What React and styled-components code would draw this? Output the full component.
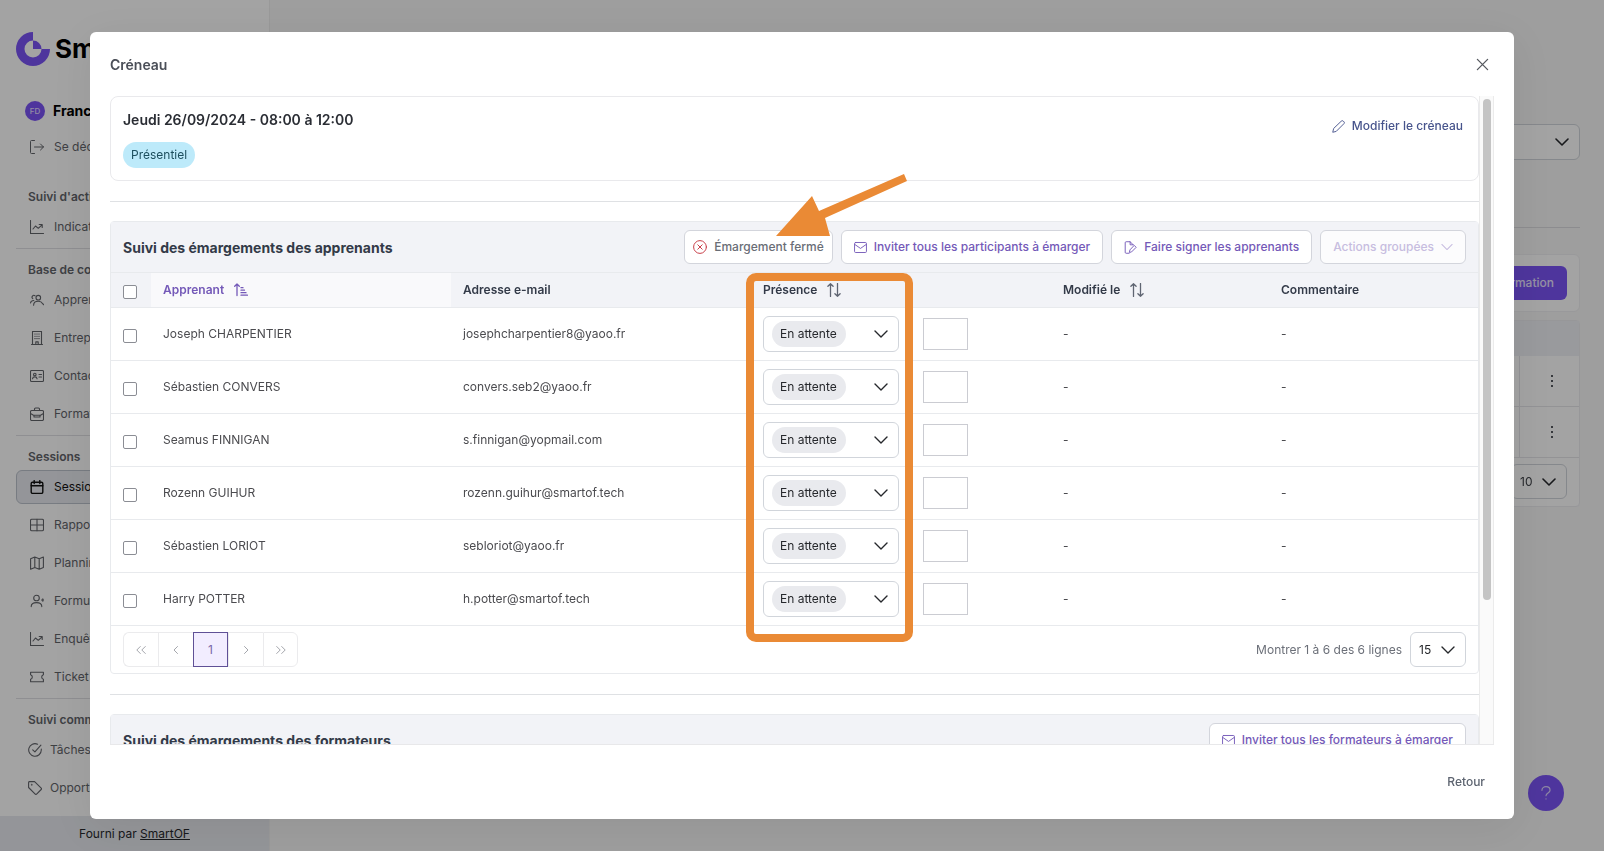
import React, { useState } from 'react';
import styled, { createGlobalStyle, css } from 'styled-components';

const GlobalStyle = createGlobalStyle`
    *, *::before, *::after {
        box-sizing: border-box;
    }

    body {
        margin: 0;
        background: #f7f7f7;
        color: #4b4b4f;
        font-family: Inter, 'Liberation Sans', sans-serif;
        font-size: 12px;
        line-height: 20px;
    }

    button, select, input {
        font: inherit;
        color: inherit;
        margin: 0;
    }

    button {
        cursor: pointer;
    }
`;

// --- ICONS ---

const Icon = ({ size = 14, stroke = 1, box = 14, children }) => (
    <svg
        width={size}
        height={size}
        viewBox={`0 0 ${box} ${box}`}
        fill="none"
        stroke="currentColor"
        strokeWidth={stroke}
        strokeLinecap="round"
        strokeLinejoin="round"
        aria-hidden="true"
    >
        {children}
    </svg>
);

const ICONS = {
    logout: <path d="M4.5.5h-3a1 1 0 0 0-1 1v11a1 1 0 0 0 1 1h3M4.5 7h9M10.5 4l3 3-3 3" />,
    chart: <path d="M.5.5v13h13M3 9l2.5-3 2.8 2.3L12 4.8M9.2 4.5h3v3" />,
    users: (
        <>
            <circle cx="8.3" cy="4.7" r="2.3" />
            <path d="M3.6 12.2c0-2.4 1.9-3.9 4.7-3.9 2 0 3.6.9 4.4 2.4l.8 1M5 2.7a1.8 1.8 0 0 0-2.2 2.9M.5 10c.3-1.6 1.5-2.5 3.3-2.5" />
        </>
    ),
    building: (
        <>
            <path d="M2.5.5h9v13h-9zM5.8 13.5v-2.6h2.4v2.6M1.5 13.5h11" />
            <path d="M4.8 3h.4M6.8 3h.4M8.8 3h.4M4.8 5.3h.4M6.8 5.3h.4M8.8 5.3h.4M4.8 7.6h.4M6.8 7.6h.4M8.8 7.6h.4" />
        </>
    ),
    card: (
        <>
            <rect x=".5" y="1.5" width="13" height="11" rx="1" />
            <circle cx="4.8" cy="5.5" r="1.3" />
            <path d="M2.5 9.8c.2-1.3 1-1.9 2.3-1.9s2.1.6 2.3 1.9M9 5.5h2.5M9 8h2.5" />
        </>
    ),
    briefcase: (
        <>
            <rect x=".5" y="3.5" width="13" height="10" rx="1.3" />
            <path d="M4.5 3.5V2a1 1 0 0 1 1-1h3a1 1 0 0 1 1 1v1.5M.5 6.5l3 1.7h7l3-1.7M4 8.5V10h6V8.5" />
        </>
    ),
    calendar: (
        <>
            <rect x="1.2" y="2.2" width="11.6" height="11.2" rx="1.3" />
            <path d="M1.2 5.8h11.6M4.2.6v3M9.8.6v3" />
        </>
    ),
    grid: (
        <>
            <rect x=".5" y="1.2" width="13" height="11.6" rx="1.3" />
            <path d="M7 1.2v11.6M.5 7h13" />
        </>
    ),
    map: <path d="M.6 2.7 4.8 1l4.4 1.7L13.4 1v10.5l-4.2 1.7-4.4-1.7-4.2 1.7zM4.8 1v10.5M9.2 2.7v10.5" />,
    userPlus: (
        <>
            <circle cx="6.5" cy="4" r="2.8" />
            <path d="M1.2 12.6c0-2.6 2-4 5.3-4s5.3 1.4 5.3 4M11.5 6h2.6M12.8 4.7v2.6" />
        </>
    ),
    ticket: <path d="M.6 2.2h12.8v2.5a2.4 2.4 0 0 0 0 4.6v2.5H.6V9.3a2.4 2.4 0 0 0 0-4.6z" />,
    check: <path d="M13.3 6.1V7A6.3 6.3 0 1 1 9.6 1.2M4.7 6.8l2.2 2.1 6-6.7" />,
    tag: (
        <>
            <path d="M.6 1.5v5l6.6 6.6a1 1 0 0 0 1.4 0l4.6-4.6a1 1 0 0 0 0-1.4L6.6.6h-5a1 1 0 0 0-1 .9z" />
            <circle cx="3.7" cy="3.7" r=".3" />
        </>
    ),
    mail: (
        <>
            <rect x=".6" y="1.6" width="12.8" height="10.8" rx="1.2" />
            <path d="m1 3.8 6 4.2 6-4.2" />
        </>
    ),
    sign: <path d="M5.5 13.2H2.3a1 1 0 0 1-1-1V1.8a1 1 0 0 1 1-1h4.3l3.3 3.3M6.6.8v3.3h3.3M11.3 5l1.8 1.8-5 5-2.3.5.5-2.3z" />,
    closed: (
        <>
            <circle cx="7" cy="7" r="6.4" />
            <path d="M4.8 4.8l4.4 4.4M9.2 4.8L4.8 9.2" />
        </>
    ),
    pencil: <path d="M10.1 1.1a1.3 1.3 0 0 1 1.9 0l.9.9a1.3 1.3 0 0 1 0 1.9L4.5 12.3l-3.7.9.9-3.7z" />,
    close: <path d="M1.5 1.5l11 11M12.5 1.5l-11 11" />,
    down: <path d="M1 4l6 6 6-6" />,
    left: <path d="M8.5 3.5L5 7l3.5 3.5" />,
    right: <path d="M5.5 3.5L9 7l-3.5 3.5" />,
    first: <path d="M6.3 3.5L2.8 7l3.5 3.5M11.3 3.5L7.8 7l3.5 3.5" />,
    last: <path d="M2.7 3.5L6.2 7l-3.5 3.5M7.7 3.5L11.2 7l-3.5 3.5" />,
    sort: <path d="M3.5 13.5V.7M.9 3.3L3.5.7l2.6 2.6M10.5.5v12.8M7.9 10.7l2.6 2.6 2.6-2.6" />,
    sortUp: <path d="M3 12.5V1M.7 3.3L3 1l2.3 2.3M7 4.7h2M7 7.2h3.5M7 9.7h5M7 12.2h6.5" />,
};

const Glyph = ({ name, ...rest }) => <Icon {...rest}>{ICONS[name]}</Icon>;

const Logo = () => (
    <svg width="34" height="34" viewBox="0 0 34 34" aria-hidden="true">
        <path d="M17 0a17 17 0 1 0 17 17h-8.5A8.5 8.5 0 1 1 17 8.5z" fill="#7b54f6" />
        <path d="M17 8.5V17h8.5A8.5 8.5 0 0 0 17 8.5z" fill="#7b54f6" />
    </svg>
);

// --- DATA ---

const MENU = [
    {
        title: "Suivi d'activité",
        items: [{ icon: 'chart', label: 'Indicateurs' }],
    },
    {
        title: 'Base de contacts',
        items: [
            { icon: 'users', label: 'Apprenants' },
            { icon: 'building', label: 'Entreprises' },
            { icon: 'card', label: 'Contacts' },
            { icon: 'briefcase', label: 'Formateurs' },
        ],
    },
    {
        title: 'Sessions',
        items: [
            { icon: 'calendar', label: 'Sessions', active: true },
            { icon: 'grid', label: 'Rapports' },
            { icon: 'map', label: 'Planning' },
            { icon: 'userPlus', label: 'Formulaires' },
            { icon: 'chart', label: 'Enquêtes' },
            { icon: 'ticket', label: 'Ticket' },
        ],
    },
    {
        title: 'Suivi commercial',
        tight: true,
        items: [
            { icon: 'check', label: 'Tâches' },
            { icon: 'tag', label: 'Opportunités' },
        ],
    },
];

const LEARNERS = [
    { name: 'Joseph CHARPENTIER', email: 'josephcharpentier8@yaoo.fr' },
    { name: 'Sébastien CONVERS', email: 'convers.seb2@yaoo.fr' },
    { name: 'Seamus FINNIGAN', email: 's.finnigan@yopmail.com' },
    { name: 'Rozenn GUIHUR', email: 'rozenn.guihur@smartof.tech' },
    { name: 'Sébastien LORIOT', email: 'sebloriot@yaoo.fr' },
    { name: 'Harry POTTER', email: 'h.potter@smartof.tech' },
];

// --- PARTS ---

const Sidebar = () => (
    <SidebarBox>
        <Brand><Logo />SmartOF</Brand>
        <User><Avatar>FD</Avatar>Franck</User>
        <MenuLink href="#logout"><Glyph name="logout" />Se déconnecter</MenuLink>
        <nav>
            {MENU.map((section) => (
                <MenuSection key={section.title}>
                    <MenuTitle>{section.title}</MenuTitle>
                    <MenuItems>
                        {section.items.map((item) => (
                            <MenuLink key={item.label} href="#menu" $active={item.active} $tight={section.tight}>
                                <Glyph name={item.icon} stroke={item.active ? 1.4 : 1.1} />
                                {item.label}
                            </MenuLink>
                        ))}
                    </MenuItems>
                </MenuSection>
            ))}
        </nav>
        <PoweredBy>Fourni par&nbsp;<a href="#smartof">SmartOF</a></PoweredBy>
    </SidebarBox>
);

const SessionPage = () => (
    <Main>
        <SelectBox $height={36}>
            <Select aria-label="Session"><option></option></Select>
            <Glyph name="down" stroke={1.6} />
        </SelectBox>
        <PageRule />
        <PageCard>
            <PrimaryButton type="button">Ajouter une formation</PrimaryButton>
        </PageCard>
        <PageTable>
            <PageTableHead />
            {[1, 2].map((row) => (
                <PageTableRow key={row}>
                    <MenuButton type="button" aria-label="Actions">
                        <i /><i /><i />
                    </MenuButton>
                </PageTableRow>
            ))}
            <PageTableFoot>
                <SelectBox $height={35}>
                    <Select aria-label="Lignes par page" $compact><option>10</option></Select>
                    <Glyph name="down" stroke={1.6} />
                </SelectBox>
            </PageTableFoot>
        </PageTable>
    </Main>
);

const PresenceSelect = ({ name }) => (
    <SelectBox $height={36} $pill>
        <Select aria-label={`Présence de ${name}`} $pill>
            <option>En attente</option>
            <option>Présent</option>
            <option>Absent</option>
        </Select>
        <Glyph name="down" stroke={1.4} />
    </SelectBox>
);

const LearnersTable = () => {
    const [selected, setSelected] = useState([]);

    const toggle = (name) => {
        setSelected(selected.includes(name) ? selected.filter((n) => n !== name) : [...selected, name]);
    };

    const toggleAll = () => {
        setSelected(selected.length === LEARNERS.length ? [] : LEARNERS.map((l) => l.name));
    };

    return (
        <Table>
            <colgroup>
                <Col $width={40} />
                <Col $width={300} />
                <Col $width={300} />
                <Col $width={160} />
                <Col $width={140} />
                <Col $width={218} />
                <Col $width={209} />
            </colgroup>
            <thead>
                <tr>
                    <Th>
                        <Checkbox
                            aria-label="Tout sélectionner"
                            checked={selected.length === LEARNERS.length}
                            onChange={toggleAll}
                        />
                    </Th>
                    <Th $sorted><ThLabel $sorted>Apprenant <Glyph name="sortUp" stroke={1.3} /></ThLabel></Th>
                    <Th>Adresse e-mail</Th>
                    <Th><ThLabel>Présence <Glyph name="sort" stroke={1.3} /></ThLabel></Th>
                    <Th />
                    <Th><ThLabel>Modifié le <Glyph name="sort" stroke={1.3} /></ThLabel></Th>
                    <Th>Commentaire</Th>
                </tr>
            </thead>
            <tbody>
                {LEARNERS.map(({ name, email }) => (
                    <tr key={email}>
                        <Td>
                            <Checkbox
                                aria-label={`Sélectionner ${name}`}
                                checked={selected.includes(name)}
                                onChange={() => toggle(name)}
                            />
                        </Td>
                        <Td>{name}</Td>
                        <Td>{email}</Td>
                        <Td><PresenceSelect name={name} /></Td>
                        <Td><SignatureBox /></Td>
                        <Td>-</Td>
                        <Td>-</Td>
                    </tr>
                ))}
            </tbody>
        </Table>
    );
};

const Paginator = () => (
    <PanelFooter>
        <Pages>
            <PageButton type="button" aria-label="Première page"><Glyph name="first" /></PageButton>
            <PageButton type="button" aria-label="Page précédente"><Glyph name="left" /></PageButton>
            <PageButton type="button" $active>1</PageButton>
            <PageButton type="button" aria-label="Page suivante"><Glyph name="right" /></PageButton>
            <PageButton type="button" aria-label="Dernière page"><Glyph name="last" /></PageButton>
        </Pages>
        <RowsPerPage>
            Montrer 1 à 6 des 6 lignes
            <SelectBox $height={35}>
                <Select aria-label="Lignes par page" $compact>
                    <option>15</option>
                    <option>30</option>
                </Select>
                <Glyph name="down" stroke={1.4} />
            </SelectBox>
        </RowsPerPage>
    </PanelFooter>
);

const SlotDialog = () => (
    <Dialog role="dialog" aria-modal="true" aria-labelledby="slot-title">
        <DialogHeader>
            <DialogTitle id="slot-title">Créneau</DialogTitle>
            <CloseButton type="button" aria-label="Fermer"><Glyph name="close" size={13} stroke={1.4} /></CloseButton>
        </DialogHeader>
        <DialogBody>
            <ScrollArea>
                <SlotCard>
                    <div>
                        <SlotDate>Jeudi 26/09/2024 - 08:00 à 12:00</SlotDate>
                        <Badge>Présentiel</Badge>
                    </div>
                    <EditButton type="button"><Glyph name="pencil" size={13} />Modifier le créneau</EditButton>
                </SlotCard>
                <Rule />
                <Panel>
                    <PanelHeader>
                        <PanelTitle>Suivi des émargements des apprenants</PanelTitle>
                        <Actions>
                            <ActionButton type="button" $muted><Glyph name="closed" />Émargement fermé</ActionButton>
                            <ActionButton type="button"><Glyph name="mail" size={13} />Inviter tous les participants à émarger</ActionButton>
                            <ActionButton type="button"><Glyph name="sign" size={13} />Faire signer les apprenants</ActionButton>
                            <ActionButton type="button" disabled>Actions groupées<Glyph name="down" size={12} stroke={1.2} /></ActionButton>
                        </Actions>
                    </PanelHeader>
                    <LearnersTable />
                    <Paginator />
                    <Highlight>
                        <svg width="132" height="64" viewBox="0 0 132 64" aria-hidden="true">
                            <path d="M128 0l3 7L49 44l5 18H0L36 22l7 15z" fill="#ea8a35" />
                        </svg>
                    </Highlight>
                </Panel>
                <Rule />
                <Panel>
                    <PanelHeader>
                        <PanelTitle>Suivi des émargements des formateurs</PanelTitle>
                        <Actions>
                            <ActionButton type="button"><Glyph name="mail" size={13} />Inviter tous les formateurs à émarger</ActionButton>
                        </Actions>
                    </PanelHeader>
                </Panel>
            </ScrollArea>
            <ScrollTrack><ScrollThumb /></ScrollTrack>
        </DialogBody>
        <DialogFooter>
            <BackButton type="button">Retour</BackButton>
        </DialogFooter>
    </Dialog>
);

const App = () => (
    <>
        <GlobalStyle />
        <Shell>
            <Sidebar />
            <SessionPage />
            <HelpButton type="button" aria-label="Aide">
                <Icon size={18} box={20} stroke={1.3}>
                    <path d="M5.5 7C5.5 4.5 7.5 3 10 3s4.500 1.500 4.500 4c0 3-4.500 3-4.500 6M10 16.500v.2" />
                </Icon>
            </HelpButton>
        </Shell>
        <Overlay>
            <SlotDialog />
        </Overlay>
    </>
);

export default App;

// --- PAGE ---

const Shell = styled.div`
    display: flex;
    height: 100vh;
    overflow: hidden;
`;

const SidebarBox = styled.aside`
    display: flex;
    flex-direction: column;
    flex: none;
    width: 270px;
    padding: 32px 16px 0;
    background: #ffffff;
    border-right: 1px solid #f0f0f0;
    color: #62646a;
`;

const Brand = styled.div`
    display: flex;
    align-items: center;
    gap: 5px;
    height: 34px;
    color: #000000;
    font-size: 26px;
    font-weight: 700;
`;

const User = styled.div`
    display: flex;
    align-items: center;
    gap: 8px;
    height: 30px;
    margin: 30px 0 4px;
    padding-left: 9px;
    color: #000000;
    font-size: 14px;
    font-weight: 700;
`;

const Avatar = styled.span`
    display: grid;
    place-items: center;
    width: 20px;
    height: 20px;
    border-radius: 50%;
    background: #7b54f6;
    color: #e4dcff;
    font-size: 8px;
    font-weight: 500;
`;

const MenuLink = styled.a`
    display: flex;
    align-items: center;
    gap: ${({ $tight }) => ($tight ? 8 : 10)}px;
    height: 34px;
    padding-left: ${({ $tight }) => ($tight ? 12 : 14)}px;
    color: inherit;
    text-decoration: none;

    ${({ $active }) => $active && css`
        padding-left: 13px;
        border: 1px solid #bcc2cc;
        border-radius: 6px;
        background: #e8eaef;
        color: #111111;
    `}
`;

const MenuSection = styled.section`
    padding-top: 8px;
    margin-bottom: 4px;

    &:first-child {
        padding-top: 20px;
    }

    & + & {
        border-top: 1px solid #e0e0e4;
    }
`;

const MenuTitle = styled.h3`
    margin: 0;
    padding-left: 12px;
    font-size: 12px;
    line-height: 26px;
    font-weight: 600;
`;

const MenuItems = styled.div`
    display: grid;
    gap: 4px;
`;

const PoweredBy = styled.footer`
    display: flex;
    align-items: center;
    justify-content: center;
    height: 35px;
    margin: auto -16px 0;
    background: #e8eaef;
    color: #26282c;

    a {
        color: inherit;
    }
`;

const Main = styled.main`
    flex: 1;
    padding: 124px 24px 0 16px;
`;

const PageRule = styled.hr`
    height: 1px;
    margin: 67px 0 26px;
    border: 0;
    background: #dcdce0;
`;

const PageCard = styled.div`
    display: flex;
    justify-content: flex-end;
    margin-bottom: 8px;
    padding: 11px 12px;
    border: 1px solid #f0f0f2;
    border-radius: 6px;
    background: #ffffff;
`;

const PrimaryButton = styled.button`
    height: 34px;
    padding: 0 13px;
    border: 0;
    border-radius: 6px;
    background: #7b54f6;
    color: #e9e3ff;
    font-weight: 500;
`;

const PageTable = styled.div`
    border: 1px solid #ececf0;
    border-radius: 4px;
    background: #ffffff;
`;

const PageTableHead = styled.div`
    height: 35px;
    background: #eff1f6;
`;

const PageTableRow = styled.div`
    display: flex;
    justify-content: flex-end;
    height: 51px;
    border-bottom: 1px solid #e6e6ea;
`;

const MenuButton = styled.button`
    display: flex;
    flex-direction: column;
    align-items: center;
    justify-content: center;
    gap: 3px;
    width: 60px;
    padding: 0 0 0 4px;
    border: 0;
    border-left: 1px solid #e6e6ea;
    background: none;

    i {
        width: 2px;
        height: 2px;
        background: #55585e;
    }
`;

const PageTableFoot = styled.div`
    display: flex;
    justify-content: flex-end;
    padding: 6px 12px 7px;
`;

const HelpButton = styled.button`
    position: fixed;
    right: 40px;
    bottom: 40px;
    display: grid;
    place-items: center;
    width: 36px;
    height: 36px;
    padding: 0;
    border: 0;
    border-radius: 50%;
    background: #7b54f6;
    color: #ddd3ff;
`;

// --- FORM CONTROLS ---

const SelectBox = styled.div`
    display: grid;
    align-items: center;
    height: ${({ $height }) => $height}px;
    border: 1px solid #d1d5db;
    border-radius: 6px;
    background: #ffffff;
    color: #26282c;

    ${({ $pill }) => $pill && css`
        max-width: 136px;

        &::before {
            content: '';
            grid-area: 1 / 1;
            width: 74px;
            height: 26px;
            margin-left: 8px;
            border-radius: 13px;
            background: #e9eaee;
        }
    `}

    svg {
        grid-area: 1 / 1;
        justify-self: end;
        margin-right: 10px;
        pointer-events: none;
    }
`;

const Select = styled.select`
    grid-area: 1 / 1;
    z-index: 1;
    width: 100%;
    height: 100%;
    padding: 0 36px 0 ${({ $pill }) => ($pill ? 16 : 8)}px;
    border: 0;
    background: transparent;
    appearance: none;
    ${({ $compact }) => $compact && 'width: 54px; padding-right: 26px;'}
`;

const Checkbox = styled.input.attrs({ type: 'checkbox' })`
    display: block;
    width: 14px;
    height: 14px;
    margin-top: 4px;
    border: 1px solid #8b8d94;
    border-radius: 2px;
    background: #ffffff;
    appearance: none;

    &:checked {
        border-color: #7b54f6;
        background: #7b54f6;
    }
`;

// --- DIALOG ---

const Overlay = styled.div`
    position: fixed;
    inset: 0;
    display: grid;
    padding: 32px 90px;
    background: rgba(0, 0, 0, 0.36);
`;

const Dialog = styled.section`
    display: flex;
    flex-direction: column;
    min-width: 0;
    min-height: 0;
    padding: 0 20px;
    border-radius: 6px;
    background: #ffffff;
    box-shadow: 0 9px 46px 8px rgba(0, 0, 0, 0.06);
`;

const DialogHeader = styled.header`
    display: flex;
    align-items: center;
    justify-content: space-between;
    flex: none;
    height: 64px;
`;

const DialogTitle = styled.h2`
    margin: 0;
    padding-top: 2px;
    color: #4b4f58;
    font-size: 14px;
    font-weight: 600;
`;

const CloseButton = styled.button`
    display: grid;
    place-items: center;
    width: 24px;
    height: 24px;
    padding: 0;
    border: 0;
    background: none;
    color: #55585e;
`;

const DialogBody = styled.div`
    display: flex;
    flex: 1;
    min-height: 0;
    border-bottom: 1px solid #e8e8ea;
`;

const ScrollArea = styled.div`
    flex: 1;
    min-width: 0;
    overflow-y: auto;
    scrollbar-width: none;
`;

const ScrollTrack = styled.div`
    flex: none;
    width: 15px;
    padding: 3px 0;
    border: 1px solid #ebebeb;
    border-width: 0 1px;
    background: #fafafa;
`;

const ScrollThumb = styled.div`
    width: 8px;
    height: 78%;
    margin: 0 auto;
    border-radius: 4px;
    background: #c4c4c4;
`;

const SlotCard = styled.section`
    display: flex;
    justify-content: space-between;
    align-items: flex-start;
    padding: 12px;
    border: 1px solid #e9e9ec;
    border-radius: 8px;
`;

const SlotDate = styled.div`
    margin-bottom: 11px;
    color: #2a2d34;
    font-size: 14px;
    line-height: 22px;
    font-weight: 600;
`;

const Badge = styled.span`
    display: block;
    width: fit-content;
    padding: 0 8px;
    border-radius: 13px;
    background: #bdeafa;
    color: #1d4f5e;
    line-height: 26px;
`;

const EditButton = styled.button`
    display: flex;
    align-items: center;
    gap: 7px;
    height: 34px;
    padding: 0 3px;
    border: 0;
    background: none;
    color: #47548c;
    font-weight: 500;
`;

const Rule = styled.hr`
    height: 1px;
    margin: 20px 0 19px;
    border: 0;
    background: #dfe1e4;
`;

const Panel = styled.section`
    position: relative;
    border: 1px solid #e8eaed;
    border-radius: 4px;
`;

const PanelHeader = styled.header`
    display: flex;
    align-items: center;
    justify-content: space-between;
    padding: 8px 12px;
    background: #f2f3f7;
`;

const PanelTitle = styled.h3`
    margin: 0;
    padding-top: 2px;
    color: #333a48;
    font-size: 14px;
    font-weight: 700;
`;

const Actions = styled.div`
    display: flex;
    gap: 8px;
`;

const ActionButton = styled.button`
    display: flex;
    align-items: center;
    gap: 7px;
    height: 34px;
    padding: 0 12px;
    border: 1px solid #d3d5dc;
    border-radius: 6px;
    background: #ffffff;
    color: #7459b8;
    font-weight: 500;
    white-space: nowrap;

    ${({ $muted }) => $muted && css`
        padding: 0 8px;
        color: #696d76;

        svg {
            color: #c9404a;
        }
    `}

    &:disabled {
        background: #fcfcfd;
        color: #c7bde0;
    }
`;

const Table = styled.table`
    width: 100%;
    table-layout: fixed;
    border-spacing: 0;
`;

const Col = styled.col`
    width: ${({ $width }) => $width}px;
`;

const Th = styled.th`
    height: 36px;
    padding: 0 12px;
    border: 1px solid #e8eaed;
    border-width: 1px 0;
    background: ${({ $sorted }) => ($sorted ? '#f9f9fb' : '#f2f3f7')};
    color: ${({ $sorted }) => ($sorted ? '#7459b8' : '#333a48')};
    font-weight: 600;
    text-align: left;
`;

const ThLabel = styled.span`
    display: flex;
    align-items: center;
    gap: 10px;

    svg {
        color: ${({ $sorted }) => ($sorted ? '#7459b8' : '#5f6572')};
    }
`;

const Td = styled.td`
    height: 53px;
    padding: 0 12px;
    border-bottom: 1px solid #e8eaed;
`;

const SignatureBox = styled.div`
    width: 45px;
    height: 32px;
    border: 1px solid #cbccd2;
`;

const PanelFooter = styled.footer`
    display: flex;
    align-items: center;
    justify-content: space-between;
    padding: 6px 12px;
`;

const Pages = styled.div`
    display: flex;
`;

const PageButton = styled.button`
    display: grid;
    place-items: center;
    width: 35px;
    height: 35px;
    padding: 0;
    border: 1px solid #ebebed;
    border-right-width: 0;
    background: #ffffff;
    color: #a4a6ac;

    &:first-child {
        border-radius: 6px 0 0 6px;
    }

    &:last-child {
        border-right-width: 1px;
        border-radius: 0 6px 6px 0;
    }

    ${({ $active }) => $active && css`
        border: 1px solid #5f5096;
        background: #f2edff;
        color: #7a68a8;
    `}
`;

const RowsPerPage = styled.div`
    display: flex;
    align-items: center;
    gap: 8px;
    color: #6b6f78;
`;

const DialogFooter = styled.footer`
    display: flex;
    align-items: center;
    justify-content: flex-end;
    flex: none;
    height: 74px;
`;

const BackButton = styled.button`
    padding: 6px 9px;
    border: 0;
    background: none;
    color: #5d6470;
    font-weight: 500;
`;

// Frame around the presence column, with its arrow pointing at the status button
const Highlight = styled.div`
    position: absolute;
    top: 51px;
    left: 635px;
    width: 167px;
    height: 369px;
    border: 8px solid #ea8a35;
    border-radius: 10px;
    pointer-events: none;

    svg {
        position: absolute;
        top: -107px;
        left: 22px;
    }
`;
